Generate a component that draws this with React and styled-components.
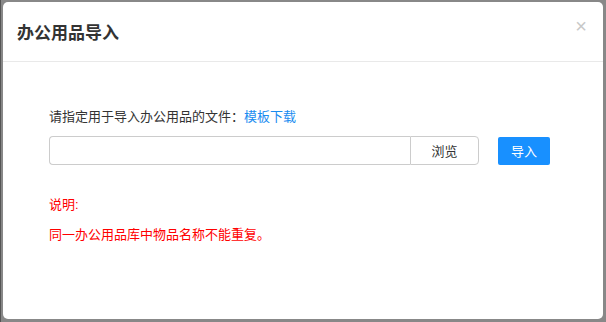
import React from 'react'
import styled, { createGlobalStyle } from 'styled-components'

const GlobalStyle = createGlobalStyle`
  html, body {
    margin: 0;
    padding: 0;
    background: #7d7d7d;
    font-family: "Liberation Sans", "Noto Sans CJK SC", sans-serif;
  }
`

const Backdrop = styled.div`
  width: 606px;
  height: 322px;
  box-sizing: border-box;
  padding: 2px 3px 3px 2px;
  background: #888;
  border-left: 1px solid #555;
`

const Modal = styled.div`
  height: 100%;
  background: #fff;
  border-radius: 5px;
  display: flex;
  flex-direction: column;
`

const Header = styled.div`
  height: 59px;
  border-bottom: 1px solid #e9e9e9;
  display: flex;
  align-items: center;
  justify-content: space-between;
  padding: 0 16px 0 14px;
`

const Title = styled.h3`
  margin: 0;
  font-size: 17px;
  font-weight: bold;
  color: #333;
`

const Close = styled.span`
  font-size: 20px;
  color: #c8c8c8;
  margin-top: -12px;
  line-height: 1;
`

const Body = styled.div`
  padding: 45px 0 0 46px;
  font-size: 13px;
  color: #333;
`

const Label = styled.div`
  line-height: 20px;
`

const Link = styled.a`
  color: #1a8cf0;
  text-decoration: none;
`

const Row = styled.div`
  display: flex;
  align-items: center;
  margin-top: 9px;
`

const FileBox = styled.div`
  width: 360px;
  height: 27px;
  border: 1px solid #ccc;
  border-right: none;
  border-radius: 4px 0 0 4px;
`

const Browse = styled.button`
  width: 69px;
  height: 29px;
  border: 1px solid #ccc;
  border-radius: 0 4px 4px 0;
  background: #fff;
  font: inherit;
  color: #333;
`

const Primary = styled.button`
  width: 52px;
  height: 28px;
  margin-left: 19px;
  border: none;
  border-radius: 2px;
  background: #1890ff;
  color: #fff;
  font: inherit;
`

const Note = styled.div`
  color: #f00;
  margin-top: ${p => p.gap}px;
  line-height: 20px;
`

export default function App() {
  return (
    <Backdrop>
      <GlobalStyle />
      <Modal>
        <Header>
          <Title>办公用品导入</Title>
          <Close>×</Close>
        </Header>
        <Body>
          <Label>
            请指定用于导入办公用品的文件：<Link href="#">模板下载</Link>
          </Label>
          <Row>
            <FileBox />
            <Browse>浏览</Browse>
            <Primary>导入</Primary>
          </Row>
          <Note gap={30}>说明:</Note>
          <Note gap={10}>同一办公用品库中物品名称不能重复。</Note>
        </Body>
      </Modal>
    </Backdrop>
  )
}
